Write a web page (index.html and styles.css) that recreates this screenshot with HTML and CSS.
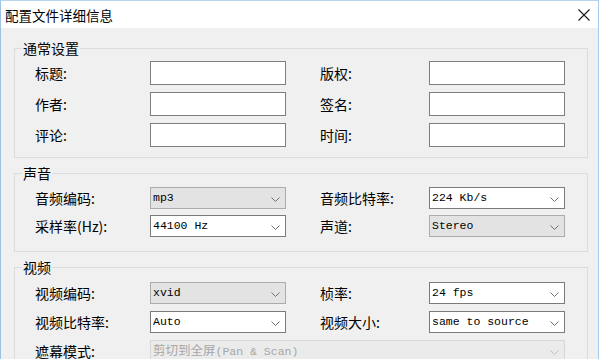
FILE: index.html
```html
<!DOCTYPE html>
<html lang="zh-CN">
<head>
<meta charset="utf-8">
<title>配置文件详细信息</title>
<link rel="stylesheet" href="styles.css">
</head>
<body>
<div class="window">
  <div class="titlebar">
    <span class="title">配置文件详细信息</span>
    <svg class="close" width="12" height="12" viewBox="0 0 12 12"><path d="M0.5 0.5 L11.5 11.5 M11.5 0.5 L0.5 11.5" stroke="#1a1a1a" stroke-width="1.1" fill="none"/></svg>
  </div>
  <div class="dialog">
    <fieldset class="group g1">
      <legend>通常设置</legend>
      <div class="grid rows-edit">
        <label class="lbl">标题:</label><input class="edit" type="text">
        <label class="lbl lbl-r">版权:</label><input class="edit" type="text">
        <label class="lbl">作者:</label><input class="edit" type="text">
        <label class="lbl lbl-r">签名:</label><input class="edit" type="text">
        <label class="lbl">评论:</label><input class="edit" type="text">
        <label class="lbl lbl-r">时间:</label><input class="edit" type="text">
      </div>
    </fieldset>
    <fieldset class="group g2">
      <legend>声音</legend>
      <div class="grid rows-combo">
        <label class="lbl">音频编码:</label>
        <div class="combo ro"><span class="val">mp3</span><svg class="chev" width="9" height="5" viewBox="0 0 9 5"><path d="M0.5 0.5 L4.5 4.5 L8.5 0.5" stroke="#707070" fill="none"/></svg></div>
        <label class="lbl lbl-r">音频比特率:</label>
        <div class="combo"><span class="val">224 Kb/s</span><svg class="chev" width="9" height="5" viewBox="0 0 9 5"><path d="M0.5 0.5 L4.5 4.5 L8.5 0.5" stroke="#707070" fill="none"/></svg></div>
        <label class="lbl">采样率(Hz):</label>
        <div class="combo"><span class="val">44100 Hz</span><svg class="chev" width="9" height="5" viewBox="0 0 9 5"><path d="M0.5 0.5 L4.5 4.5 L8.5 0.5" stroke="#707070" fill="none"/></svg></div>
        <label class="lbl lbl-r">声道:</label>
        <div class="combo ro"><span class="val">Stereo</span><svg class="chev" width="9" height="5" viewBox="0 0 9 5"><path d="M0.5 0.5 L4.5 4.5 L8.5 0.5" stroke="#707070" fill="none"/></svg></div>
      </div>
    </fieldset>
    <fieldset class="group g3">
      <legend>视频</legend>
      <div class="grid rows-combo3">
        <label class="lbl">视频编码:</label>
        <div class="combo ro"><span class="val">xvid</span><svg class="chev" width="9" height="5" viewBox="0 0 9 5"><path d="M0.5 0.5 L4.5 4.5 L8.5 0.5" stroke="#707070" fill="none"/></svg></div>
        <label class="lbl lbl-r">桢率:</label>
        <div class="combo"><span class="val">24 fps</span><svg class="chev" width="9" height="5" viewBox="0 0 9 5"><path d="M0.5 0.5 L4.5 4.5 L8.5 0.5" stroke="#707070" fill="none"/></svg></div>
        <label class="lbl">视频比特率:</label>
        <div class="combo"><span class="val">Auto</span><svg class="chev" width="9" height="5" viewBox="0 0 9 5"><path d="M0.5 0.5 L4.5 4.5 L8.5 0.5" stroke="#707070" fill="none"/></svg></div>
        <label class="lbl lbl-r">视频大小:</label>
        <div class="combo"><span class="val">same to source</span><svg class="chev" width="9" height="5" viewBox="0 0 9 5"><path d="M0.5 0.5 L4.5 4.5 L8.5 0.5" stroke="#707070" fill="none"/></svg></div>
        <label class="lbl">遮幕模式:</label>
        <div class="combo disabled wide"><span class="val"><span class="cjk">剪切到全屏</span>(Pan &amp; Scan)</span><svg class="chev" width="9" height="5" viewBox="0 0 9 5"><path d="M0.5 0.5 L4.5 4.5 L8.5 0.5" stroke="#c0c0c0" fill="none"/></svg></div>
      </div>
    </fieldset>
  </div>
</div>
</body>
</html>
```
FILE: styles.css
```css
* { box-sizing: border-box; }
html, body { margin: 0; padding: 0; }
body {
  width: 600px;
  height: 362px;
  background: #ffffff;
  font-family: "Noto Sans CJK SC", "Noto Sans", sans-serif;
  overflow: hidden;
}
.window {
  width: 599px;
  height: 359px;
  border-left: 1px solid #9cc2e4;
  border-right: 1px solid #a9cbe8;
  border-top: 1px solid #b9d5ee;
  background: #f0f0f0;
  overflow: hidden;
}
.titlebar {
  height: 27px;
  background: #ffffff;
  display: flex;
  align-items: center;
  justify-content: space-between;
  padding: 0 8px 0 4px;
}
.title {
  font-size: 13.5px;
  color: #000;
  line-height: 18px;
}
.close { display: block; }
.dialog {
  padding-top: 11px;
}
.group {
  margin: 0 10px 0 13px;
  border: 1px solid #dcdcdc;
  padding: 0 21px 0 20px;
  min-inline-size: 0;
}
.group legend {
  font-size: 14px;
  line-height: 18px;
  height: 18px;
  padding: 0 1px;
  margin-left: -13px;
  color: #000;
}
.g1 { padding-top: 4px; padding-bottom: 10px; }
.g2 { margin-top: 6px; padding-top: 5px; padding-bottom: 14px; }
.g3 { margin-top: 6px; padding-top: 6px; padding-bottom: 20px; }
.grid {
  display: grid;
  grid-template-columns: 115px 136px 143px 136px;
}
.rows-edit { grid-auto-rows: 24px; row-gap: 7px; }
.rows-combo { grid-auto-rows: 22px; row-gap: 6px; }
.rows-combo3 { grid-auto-rows: 22px; row-gap: 7px; }
.lbl {
  font-size: 14px;
  color: #000;
  display: flex;
  align-items: center;
  white-space: nowrap;
  line-height: 18px;
}
.lbl-r { padding-left: 34px; }
.edit {
  width: 136px;
  height: 24px;
  margin: 0;
  padding: 0 3px;
  border: 1px solid #7e7e7e;
  background: #ffffff;
  outline: none;
}
.combo {
  height: 22px;
  border: 1px solid #7a7a7a;
  background: #ffffff;
  display: flex;
  align-items: center;
  justify-content: space-between;
  padding: 0 5px 0 2px;
}
.combo.ro {
  background: #e3e3e3;
  border-color: #acacac;
}
.combo.disabled {
  background: #ebebeb;
  border-color: #d6d6d6;
}
.combo.wide {
  grid-column: 2 / 5;
}
.val {
  font-family: "Liberation Mono", "Noto Sans CJK SC", monospace;
  font-size: 11.5px;
  color: #000;
  white-space: nowrap;
  line-height: 16px;
}
.disabled .val {
  color: #a6a6a6;
}
.cjk {
  font-family: "Noto Sans CJK SC", sans-serif;
  font-size: 12.5px;
}
.chev {
  display: block;
  margin-top: 2px;
}
```
